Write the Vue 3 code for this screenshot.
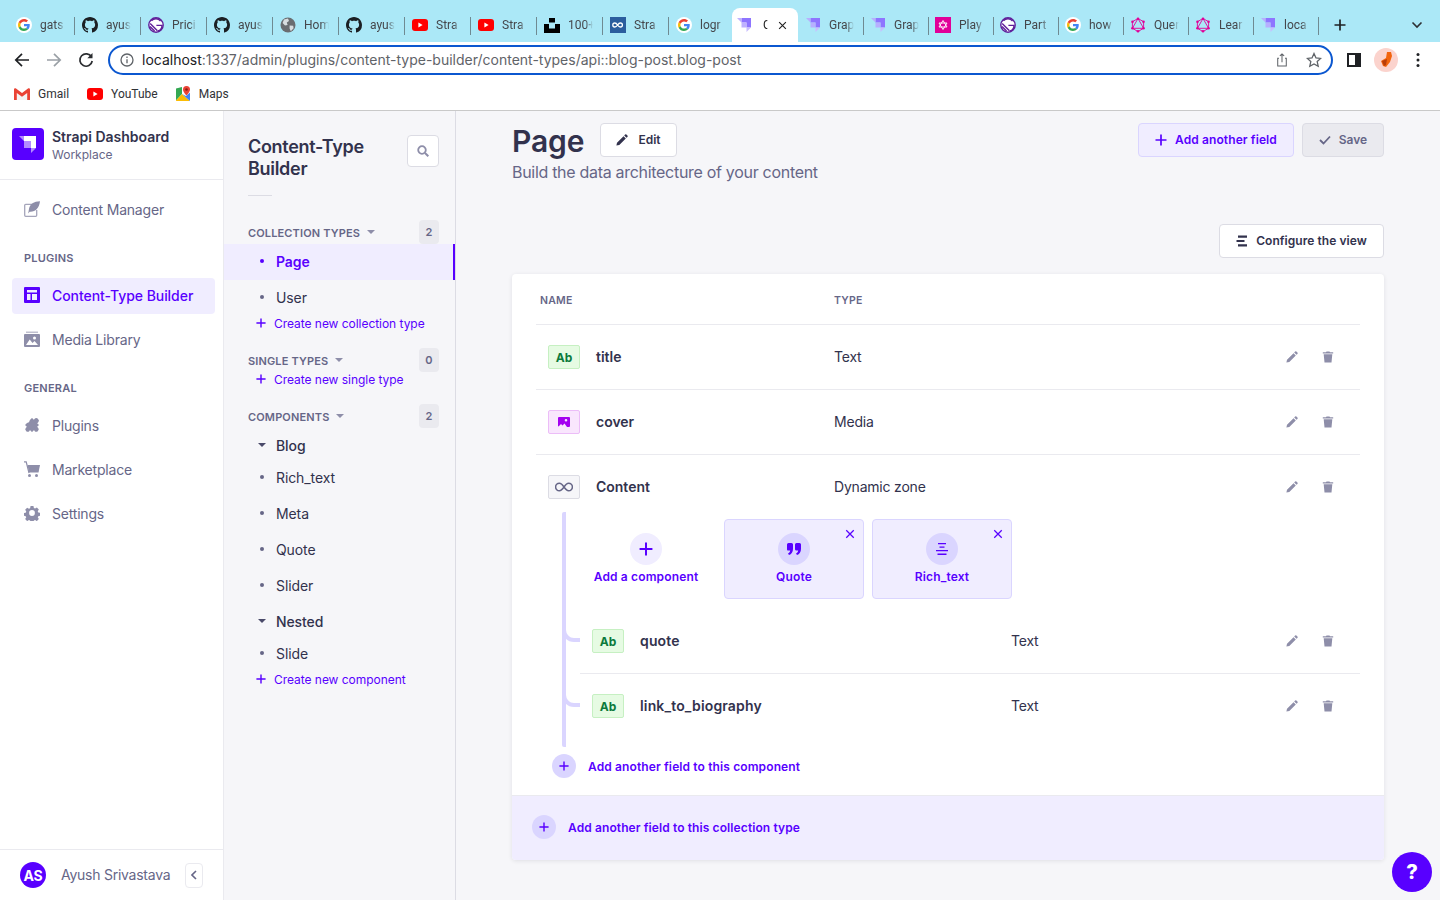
<script setup>
const tabs = [
  { i: 'g', t: 'gats' }, { i: 'gh', t: 'ayus' }, { i: 'gatsby', t: 'Prici' }, { i: 'gh', t: 'ayus' },
  { i: 'globe', t: 'Hom' }, { i: 'gh', t: 'ayus' }, { i: 'yt', t: 'Stra' }, { i: 'yt', t: 'Stra' },
  { i: 'unsplash', t: '100+' }, { i: 'coop', t: 'Stra' }, { i: 'g', t: 'logr' },
  { i: 'strapi', t: 'C', active: true },
  { i: 'strapi', t: 'Grap', n: true }, { i: 'strapi', t: 'Grap', n: true }, { i: 'play', t: 'Play', n: true },
  { i: 'gatsby', t: 'Part', n: true }, { i: 'g', t: 'how', n: true }, { i: 'gql', t: 'Quer', n: true },
  { i: 'gql', t: 'Lear', n: true }, { i: 'strapi', t: 'loca', n: true, last: true }
]
const components = ['Rich_text', 'Meta', 'Quote', 'Slider']
</script>

<template>
  <div class="app">
    <svg class="defs" width="0" height="0" aria-hidden="true">
      <symbol id="g" viewBox="-8 -8 64 64">
        <circle cx="24" cy="24" r="32" fill="#fff" />
        <path fill="#EA4335" d="M24 9.5c3.54 0 6.71 1.22 9.21 3.6l6.85-6.85C35.9 2.38 30.47 0 24 0 14.62 0 6.51 5.38 2.56 13.22l7.98 6.19C12.43 13.72 17.74 9.5 24 9.5z" />
        <path fill="#4285F4" d="M46.98 24.55c0-1.57-.15-3.09-.38-4.55H24v9.02h12.94c-.58 2.96-2.26 5.48-4.78 7.18l7.73 6c4.51-4.18 7.09-10.36 7.09-17.65z" />
        <path fill="#FBBC05" d="M10.53 28.59c-.48-1.45-.76-2.99-.76-4.59s.27-3.14.76-4.59l-7.98-6.19C.92 16.46 0 20.12 0 24c0 3.88.92 7.54 2.56 10.78l7.97-6.19z" />
        <path fill="#34A853" d="M24 48c6.48 0 11.93-2.13 15.89-5.81l-7.73-6c-2.15 1.45-4.92 2.3-8.16 2.3-6.26 0-11.57-4.22-13.47-9.91l-7.98 6.19C6.51 42.62 14.62 48 24 48z" />
      </symbol>
      <symbol id="gh" viewBox="0 0 16 16">
        <path fill="#1b1f23" d="M8 0C3.58 0 0 3.58 0 8c0 3.54 2.29 6.53 5.47 7.59.4.07.55-.17.55-.38 0-.19-.01-.82-.01-1.49-2.01.37-2.53-.49-2.69-.94-.09-.23-.48-.94-.82-1.13-.28-.15-.68-.52-.01-.53.63-.01 1.08.58 1.23.82.72 1.21 1.87.87 2.33.66.07-.52.28-.87.51-1.07-1.78-.2-3.64-.89-3.64-3.95 0-.87.31-1.59.82-2.15-.08-.2-.36-1.02.08-2.12 0 0 .67-.21 2.2.82.64-.18 1.32-.27 2-.27.68 0 1.36.09 2 .27 1.53-1.04 2.2-.82 2.2-.82.44 1.1.16 1.92.08 2.12.51.56.82 1.27.82 2.15 0 3.07-1.87 3.75-3.65 3.95.29.25.54.73.54 1.48 0 1.07-.01 1.93-.01 2.2 0 .21.15.46.55.38A8.013 8.013 0 0016 8c0-4.42-3.58-8-8-8z" />
      </symbol>
      <symbol id="gatsby" viewBox="0 0 16 16">
        <circle cx="8" cy="8" r="7.2" fill="#fff" stroke="#5f1f9a" stroke-width="1.4" />
        <path d="M2 9.5 6.6 14M2.2 6.6 9.4 13.8M3.4 3.8A6 6 0 0 1 12.6 4M8.4 8.4H14A6 6 0 0 1 10 14" fill="none" stroke="#5f1f9a" stroke-width="1.4" />
      </symbol>
      <symbol id="globe" viewBox="0 0 16 16">
        <circle cx="8" cy="8" r="7.5" fill="#6a6d71" />
        <path fill="#d8dde0" d="M4 2.5 8 1.6 9 4 6.8 5.6 7.6 8 5 8.6 2.6 6ZM9.6 8.6l3.6.2.4 2.4-2.8 3-1.2-2.6Z" />
      </symbol>
      <symbol id="yt" viewBox="0 0 16 16">
        <rect y="2" width="16" height="12" rx="3" fill="#f00" />
        <path fill="#fff" d="m6.4 5.6 4.2 2.4-4.2 2.4z" />
      </symbol>
      <symbol id="unsplash" viewBox="0 0 16 16">
        <path fill="#000" d="M5 1h6v4.5H5zM0 7h5v4.5h6V7h5v9H0z" />
      </symbol>
      <symbol id="coop" viewBox="0 0 16 16">
        <rect width="16" height="16" fill="#2b5d9e" />
        <path d="M7.6 8C6.6 6.5 5.8 6 4.8 6a2 2 0 0 0 0 4c1 0 1.8-.5 2.8-2Zm0 0c1-1.500 1.800-2 2.800-2a2 2 0 0 1 0 4c-1 0-1.800-.5-2.800-2Z" fill="none" stroke="#fff" stroke-width="1.300" />
      </symbol>
      <symbol id="strapi" viewBox="0 0 16 16">
        <path fill="#8e75ff" d="M5.500 1H15v9.500H10.500V5.500H5.500z" />
        <path fill="#b8a8ff" d="M1 1h4.500v4.500zM5.500 5.500h5v5h-5z" opacity=".9" />
        <path fill="#c9bdff" d="M10.500 10.500H15L10.500 15z" />
      </symbol>
      <symbol id="play" viewBox="0 0 16 16">
        <rect width="16" height="16" fill="#e10098" />
        <path d="M8 3.500 12 10H4ZM4 6l4 6.500L12 6Z" fill="none" stroke="#fff" stroke-width=".9" />
      </symbol>
      <symbol id="gql" viewBox="0 0 16 16">
        <path d="M8 1.500 13.600 4.700V11.300L8 14.500 2.400 11.300V4.700ZM8 1.500 13.600 11.300H2.400Z" fill="none" stroke="#e10098" stroke-width=".9" />
        <g fill="#e10098"><circle cx="8" cy="1.800" r="1.300" /><circle cx="13.500" cy="4.800" r="1.300" /><circle cx="13.500" cy="11.200" r="1.300" /><circle cx="8" cy="14.200" r="1.300" /><circle cx="2.500" cy="11.200" r="1.300" /><circle cx="2.500" cy="4.800" r="1.300" /></g>
      </symbol>
      <symbol id="plus" viewBox="0 0 12 12">
        <path d="M6 .5v11M.5 6h11" fill="none" stroke="currentColor" stroke-width="1.700" />
      </symbol>
      <symbol id="pencil" viewBox="0 0 12 12">
        <path fill="currentColor" d="M9.100.6a.9.9 0 0 1 1.300 0l1 1a.9.9 0 0 1 0 1.300l-.9.9-2.300-2.300zM7.500 2.200l2.300 2.300-6.500 6.500L.4 11.600 1 8.700z" />
      </symbol>
      <symbol id="trash" viewBox="0 0 12 12">
        <path fill="currentColor" d="M4.500.4h3l.5.9h3.200v1.200H.8V1.300H4zM1.700 3.300h8.600l-.8 8.300H2.500z" />
      </symbol>
      <symbol id="close" viewBox="0 0 12 12">
        <path d="M1.500 1.500l9 9M10.500 1.500l-9 9" fill="none" stroke="currentColor" stroke-width="1.500" />
      </symbol>
    </svg>

    <header class="chrome">
      <div class="tabstrip">
        <div
          v-for="(tab, i) in tabs"
          :key="i"
          class="tab"
          :class="{ active: tab.active, narrow: tab.n, last: tab.last }"
        >
          <svg class="fav"><use :href="'#' + tab.i" /></svg>
          <span class="tab-title">{{ tab.t }}</span>
          <svg v-if="tab.active" class="tab-x" viewBox="0 0 12 12"><use href="#close" /></svg>
        </div>
        <svg class="newtab" viewBox="0 0 12 12"><use href="#plus" /></svg>
        <svg class="tabs-menu" viewBox="0 0 12 8"><path d="M1.500 1.500 6 6l4.500-4.500" fill="none" stroke="#2c2f33" stroke-width="1.600" /></svg>
      </div>

      <div class="toolbar">
        <svg class="tool back" viewBox="0 0 16 16"><path d="M15 8H2M8 1.800 1.800 8 8 14.200" fill="none" stroke="currentColor" stroke-width="1.700" /></svg>
        <svg class="tool fwd" viewBox="0 0 16 16"><path d="M1 8h13M8 1.800 14.200 8 8 14.200" fill="none" stroke="currentColor" stroke-width="1.700" /></svg>
        <svg class="tool reload" viewBox="0 0 16 16"><path d="M13.500 5A6.200 6.200 0 1 0 14.200 9" fill="none" stroke="currentColor" stroke-width="1.700" /><path d="M14.500 1v5.200H9.300z" fill="currentColor" /></svg>
        <div class="omnibox">
          <svg class="info" viewBox="0 0 14 14"><circle cx="7" cy="7" r="6" fill="none" stroke="#5f6368" stroke-width="1.300" /><path d="M7 6.200v4M7 3.600v1.400" stroke="#5f6368" stroke-width="1.300" /></svg>
          <span class="url"><b>localhost</b>:1337/admin/plugins/content-type-builder/content-types/api::blog-post.blog-post</span>
          <svg class="omni-ic share" viewBox="0 0 14 16"><path d="M3.500 6H2v9h10V6h-1.500M7 10.500V1M4.500 3.300 7 .9l2.500 2.400" fill="none" stroke="#5f6368" stroke-width="1.200" /></svg>
          <svg class="omni-ic star" viewBox="0 0 16 16"><path d="m8 1.500 2 4.400 4.700.5-3.500 3.200 1 4.700L8 11.900l-4.200 2.400 1-4.700L1.300 6.400 6 5.900z" fill="none" stroke="#5f6368" stroke-width="1.300" /></svg>
        </div>
        <svg class="panel" viewBox="0 0 14 14"><path d="M0 0h14v14H0zM2 2v10h6V2z" fill="#1f2124" fill-rule="evenodd" /></svg>
        <div class="profile">
          <svg viewBox="0 0 24 24" width="24" height="24"><circle cx="12" cy="12" r="12" fill="#fbd3cd" /><path fill="#f2640d" d="M13 4h4l1 4-2 6-4 5-3-1-2-5 5-3z" /><path fill="#b83c08" d="m8 13 5-2-1 6-2 1z" /></svg>
        </div>
        <svg class="kebab" viewBox="0 0 4 16"><circle cx="2" cy="2.500" r="1.500" /><circle cx="2" cy="8" r="1.500" /><circle cx="2" cy="13.500" r="1.500" /></svg>
      </div>

      <div class="bookmarks">
        <div class="bm gmail">
          <svg viewBox="0 0 16 12" width="16" height="12"><path fill="#f4f4f4" d="M2.500 3 8 7l5.500-4v9h-11z" /><path fill="#ea4335" d="M0 1.500C0 .5 1.200-.2 2 .5L8 5l6-4.500c.8-.7 2-.0 2 1V12h-2.800V5L8 8.800 2.800 5v7H0z" /></svg>
          <span>Gmail</span>
        </div>
        <div class="bm yt">
          <svg><use href="#yt" /></svg>
          <span>YouTube</span>
        </div>
        <div class="bm maps">
          <svg viewBox="0 0 16 16" width="16" height="16">
            <path fill="#34a853" d="M1 2.500 7 1v7L1 14.500z" />
            <path fill="#fbbc05" d="M1 14.500 7 8l8 7H1z" />
            <path fill="#4285f4" d="M7 8 15 15V6.500L11 10z" />
            <path fill="#ea4335" d="M11.500 0A3.500 3.500 0 0 0 8 3.500C8 6 11.500 9.500 11.500 9.500S15 6 15 3.500A3.500 3.500 0 0 0 11.500 0Z" />
            <circle cx="11.500" cy="3.500" r="1.300" fill="#8c1c13" />
          </svg>
          <span>Maps</span>
        </div>
      </div>
    </header>

    <div class="shell">
      <aside class="nav">
        <div class="brand">
          <div class="logo">
            <svg viewBox="0 0 32 32" width="32" height="32">
              <path fill="#fff" d="M12 8h12v12h-5v-7h-7z" />
              <path fill="#fff" opacity=".55" d="M7 8h5v5zM12 13h7v7h-7zM19 20h5l-5 5z" />
            </svg>
          </div>
          <div>
            <div class="brand-name">Strapi Dashboard</div>
            <div class="brand-sub">Workplace</div>
          </div>
        </div>

        <div class="nav-list">
          <a class="nav-item">
            <svg viewBox="0 0 16 16"><path fill="none" stroke="#a5a5ba" stroke-width="1.300" d="M8 3.300H1.700a1 1 0 0 0-1 1v10a1 1 0 0 0 1 1h10a1 1 0 0 0 1-1V9" /><path fill="#8e8ea9" d="M16 .3C10 .3 5.600 3 4.800 9c-.1 1-.4 2.400-.8 3.500l1.700-1.800c5.300.5 9.500-3.300 10.300-10.400Z" /></svg>
            Content Manager
          </a>

          <div class="nav-label first">Plugins</div>
          <a class="nav-item current">
            <svg viewBox="0 0 16 16"><path fill="currentColor" fill-rule="evenodd" d="M1 0h14a1 1 0 0 1 1 1v14a1 1 0 0 1-1 1H1a1 1 0 0 1-1-1V1a1 1 0 0 1 1-1Zm2 3v2.500h10V3Zm0 4v6h3.500V7Zm5 0v6h5V7Z" /></svg>
            Content-Type Builder
          </a>
          <a class="nav-item">
            <svg viewBox="0 0 16 16"><path fill="#c0c0cf" d="M2 .5h12v1.500H2z" /><path fill="#8e8ea9" fill-rule="evenodd" d="M1 3h14a1 1 0 0 1 1 1v11a1 1 0 0 1-1 1H1a1 1 0 0 1-1-1V4a1 1 0 0 1 1-1Zm9.500 2.500a1.500 1.500 0 1 0 0 3 1.500 1.500 0 0 0 0-3ZM2 14h12l-3.500-4-2 2-2.800-3.500Z" /></svg>
            Media Library
          </a>

          <div class="nav-label">General</div>
          <a class="nav-item">
            <svg viewBox="0 0 16 16"><g fill="#8e8ea9" transform="rotate(45 8 8)"><rect x="3" y="3" width="10" height="10" rx=".5" /><circle cx="8" cy="2" r="2.600" /><circle cx="14" cy="8" r="2.400" /><circle cx="8" cy="14" r="2.400" /><circle cx="2" cy="8" r="1.800" fill="#fff" /></g></svg>
            Plugins
          </a>
          <a class="nav-item">
            <svg viewBox="0 0 16 16"><path fill="#8e8ea9" d="M3.500 4H16l-1.500 7.500H5Z" /><path fill="none" stroke="#8e8ea9" stroke-width="1.200" d="M0 .8h2.200l2.800 11.200" /><circle cx="5.500" cy="14.500" r="1.500" fill="#8e8ea9" /><circle cx="12.500" cy="14.500" r="1.500" fill="#8e8ea9" /></svg>
            Marketplace
          </a>
          <a class="nav-item">
            <svg viewBox="0 0 16 16"><path fill="#8e8ea9" fill-rule="evenodd" d="M6.400.3h3.200l.5 2.200 1.300.6 2-1.200 2.200 2.200-1.200 2 .6 1.300 2.200.4v3.200l-2.200.5-.6 1.300 1.200 2-2.200 2.200-2-1.200-1.300.6-.5 2.200H6.400l-.5-2.200-1.300-.6-2 1.200-2.200-2.200 1.200-2-.6-1.300-2.200-.5V8l2.200-.4.600-1.300-1.200-2 2.200-2.200 2 1.200 1.300-.6ZM8 4.800a3.200 3.200 0 1 0 0 6.400 3.200 3.200 0 0 0 0-6.400Z" transform="translate(.8 .8) scale(.9)" /></svg>
            Settings
          </a>
        </div>

        <div class="user">
          <div class="avatar">AS</div>
          <span class="user-name">Ayush Srivastava</span>
          <button class="collapse">
            <svg viewBox="0 0 6 10" width="6" height="10"><path d="M5 1 1 5l4 4" fill="none" stroke="#666687" stroke-width="1.600" /></svg>
          </button>
        </div>
      </aside>

      <aside class="sub">
        <div class="sub-head">
          <h2>Content-Type Builder</h2>
          <button class="search">
            <svg viewBox="0 0 12 12" width="12" height="12"><circle cx="5" cy="5" r="3.800" fill="none" stroke="#8e8ea9" stroke-width="1.800" /><path d="m8 8 3.300 3.300" stroke="#8e8ea9" stroke-width="2" /></svg>
          </button>
        </div>
        <div class="sub-rule"></div>

        <div class="sec-head"><span class="sec-label">Collection types</span><i class="caret"></i><span class="count">2</span></div>
        <a class="link selected"><i class="dot"></i>Page</a>
        <a class="link"><i class="dot"></i>User</a>
        <a class="create"><svg viewBox="0 0 12 12"><use href="#plus" /></svg>Create new collection type</a>

        <div class="sec-head spaced"><span class="sec-label">Single types</span><i class="caret"></i><span class="count">0</span></div>
        <a class="create"><svg viewBox="0 0 12 12"><use href="#plus" /></svg>Create new single type</a>

        <div class="sec-head spaced"><span class="sec-label">Components</span><i class="caret"></i><span class="count">2</span></div>
        <div class="group"><i class="caret dark"></i>Blog</div>
        <a v-for="c in components" :key="c" class="link"><i class="dot"></i>{{ c }}</a>
        <div class="group"><i class="caret dark"></i>Nested</div>
        <a class="link"><i class="dot"></i>Slide</a>
        <a class="create"><svg viewBox="0 0 12 12"><use href="#plus" /></svg>Create new component</a>
      </aside>

      <main class="main">
        <div class="page-top">
          <h1>Page</h1>
          <button class="btn edit">
            <svg viewBox="0 0 12 12"><use href="#pencil" /></svg>Edit
          </button>
          <span class="grow"></span>
          <button class="btn add"><svg viewBox="0 0 12 12"><use href="#plus" /></svg>Add another field</button>
          <button class="btn save">
            <svg viewBox="0 0 12 10"><path d="M1 5l3.500 3.500L11 1.500" fill="none" stroke="currentColor" stroke-width="1.800" /></svg>Save
          </button>
        </div>
        <p class="subtitle">Build the data architecture of your content</p>

        <div class="config-row">
          <button class="btn config">
            <svg viewBox="0 0 12 12"><path d="M2 .5h9v2.200H2zM.5 4.900h8v2.200h-8zM2 9.300h9v2.200H2z" fill="currentColor" /></svg>Configure the view
          </button>
        </div>

        <section class="card">
          <div class="thead"><span class="col-name">Name</span><span>Type</span></div>

          <div class="row">
            <div class="cell-name"><span class="badge text">Ab</span><b>title</b></div>
            <span class="cell-type">Text</span>
            <div class="acts"><svg viewBox="0 0 12 12"><use href="#pencil" /></svg><svg viewBox="0 0 12 12"><use href="#trash" /></svg></div>
          </div>
          <div class="row">
            <div class="cell-name">
              <span class="badge media"><svg viewBox="0 0 12 10" width="12" height="10"><path fill="#a400f0" fill-rule="evenodd" d="M1 0h10a1 1 0 0 1 1 1v8a1 1 0 0 1-1 1H9L6.500 6.500 4.500 8.500 3 7 .5 9.500A1 1 0 0 1 0 9V1a1 1 0 0 1 1-1Zm7 2a1.300 1.300 0 1 0 0 2.600A1.300 1.300 0 0 0 8 2Z" /></svg></span>
              <b>cover</b>
            </div>
            <span class="cell-type">Media</span>
            <div class="acts"><svg viewBox="0 0 12 12"><use href="#pencil" /></svg><svg viewBox="0 0 12 12"><use href="#trash" /></svg></div>
          </div>
          <div class="row open">
            <div class="cell-name">
              <span class="badge dz"><svg viewBox="0 0 18 10" width="18" height="10"><path d="M9 5C7.300 2.500 6 1.200 4.400 1.200a3.800 3.800 0 0 0 0 7.600C6 8.800 7.300 7.500 9 5Zm0 0c1.700-2.500 3-3.800 4.600-3.800a3.800 3.800 0 0 1 0 7.600C12 8.800 10.700 7.500 9 5Z" fill="none" stroke="#666687" stroke-width="1.500" /></svg></span>
              <b>Content</b>
            </div>
            <span class="cell-type">Dynamic zone</span>
            <div class="acts"><svg viewBox="0 0 12 12"><use href="#pencil" /></svg><svg viewBox="0 0 12 12"><use href="#trash" /></svg></div>
          </div>

          <div class="zone">
            <div class="tiles">
              <div class="tile plain">
                <span class="disc"><svg viewBox="0 0 12 12" width="14" height="14"><use href="#plus" /></svg></span>
                <span class="tile-label">Add a component</span>
              </div>
              <div class="tile">
                <svg class="tile-x" viewBox="0 0 12 12"><use href="#close" /></svg>
                <span class="disc"><svg viewBox="0 0 14 12" width="14" height="12"><path fill="currentColor" d="M0 1.500A1.500 1.500 0 0 1 1.500 0h3A1.500 1.500 0 0 1 6 1.500V6c0 3-1.500 5.300-4 6L1 10.500c1.300-.6 2-1.500 2.200-2.900H1.500A1.500 1.500 0 0 1 0 6Zm8 0A1.500 1.500 0 0 1 9.500 0h3A1.500 1.500 0 0 1 14 1.500V6c0 3-1.500 5.300-4 6L9 10.500c1.300-.6 2-1.500 2.200-2.900H9.500A1.500 1.500 0 0 1 8 6Z" /></svg></span>
                <span class="tile-label">Quote</span>
              </div>
              <div class="tile">
                <svg class="tile-x" viewBox="0 0 12 12"><use href="#close" /></svg>
                <span class="disc"><svg viewBox="0 0 12 12" width="12" height="12"><path fill="currentColor" d="M2 0h8v1.300H2zM3.500 3.500h5v1.300h-5zM0 7h12v1.300H0zM1.500 10.500h9V12h-9z" /></svg></span>
                <span class="tile-label">Rich_text</span>
              </div>
            </div>

            <div class="subrow line">
              <div class="sub-name"><span class="badge text">Ab</span><b>quote</b></div>
              <span class="cell-type">Text</span>
              <div class="acts"><svg viewBox="0 0 12 12"><use href="#pencil" /></svg><svg viewBox="0 0 12 12"><use href="#trash" /></svg></div>
            </div>
            <div class="subrow">
              <div class="sub-name"><span class="badge text">Ab</span><b>link_to_biography</b></div>
              <span class="cell-type">Text</span>
              <div class="acts"><svg viewBox="0 0 12 12"><use href="#pencil" /></svg><svg viewBox="0 0 12 12"><use href="#trash" /></svg></div>
            </div>
          </div>

          <div class="add-inner">
            <span class="round"><svg viewBox="0 0 12 12" width="10" height="10"><use href="#plus" /></svg></span>
            Add another field to this component
          </div>
          <div class="add-outer">
            <span class="round"><svg viewBox="0 0 12 12" width="10" height="10"><use href="#plus" /></svg></span>
            Add another field to this collection type
          </div>
        </section>
      </main>
    </div>

    <button class="help">?</button>
  </div>
</template>

<style>
html, body { margin: 0; background: #f6f6f9; }
</style>

<style scoped>
.app {
  --p: #5800ff;
  --p-soft: #f0edff;
  --p-mid: #dad5ff;
  position: relative;
  height: 900px;
  width: 1440px;
  overflow: hidden;
  display: flex;
  flex-direction: column;
  font-family: Inter, "Liberation Sans", sans-serif;
  color: #32324d;
  background: #f6f6f9;
}
.defs { position: absolute; }
button { font-family: inherit; cursor: pointer; }
h1, h2, p { margin: 0; }

/* browser */
.chrome { background: #fff; border-bottom: 1px solid #c9c9c9; flex: none; }
.tabstrip {
  height: 42px;
  background: #abe8f7;
  display: flex;
  align-items: flex-end;
  padding-left: 8px;
}
.tab {
  width: 66px;
  height: 34px;
  flex: none;
  box-sizing: border-box;
  display: flex;
  align-items: center;
  padding-left: 8px;
  position: relative;
  font-size: 12px;
  color: #45474b;
  font-family: Roboto, Inter, sans-serif;
}
.tab.narrow { width: 65px; }
.tab.narrow .fav { margin-left: -1px; }
.tab::after {
  content: "";
  position: absolute;
  right: -1px;
  top: 9px;
  height: 18px;
  width: 1px;
  background: #6f8a92;
}
.tab.active::after,
.tab:nth-child(11)::after { display: none; }
.tab.active { background: #fff; border-radius: 8px 8px 0 0; margin-left: -2px; }
.tab.active .fav { margin-left: -4px; }
.fav { width: 16px; height: 16px; flex: none; }
.tab-title {
  margin-left: 8px;
  width: 25px;
  white-space: nowrap;
  -webkit-mask-image: linear-gradient(90deg, #000 70%, transparent);
  mask-image: linear-gradient(90deg, #000 70%, transparent);
}
.tab.active .tab-title { width: 5px; margin-left: 11px; color: #222; }
.tab-x { width: 9px; height: 9px; margin-left: 10px; color: #222; }
.newtab { width: 12px; height: 12px; color: #1f2124; margin: 0 0 11px 16px; }
.tabs-menu { width: 12px; height: 8px; margin: 0 0 13px 65px; }

.toolbar { height: 36px; display: flex; align-items: center; }
.tool { width: 16px; height: 16px; flex: none; }
.back { margin-left: 14px; color: #1f2124; }
.fwd { margin-left: 16px; color: #9aa0a6; }
.reload { margin-left: 16px; color: #2b2d30; }
.omnibox {
  margin-left: 14px;
  width: 1225px;
  height: 30px;
  box-sizing: border-box;
  border: 2.5px solid #0b57d0;
  border-radius: 15px;
  display: flex;
  align-items: center;
  padding-left: 10px;
}
.info { width: 14px; height: 14px; flex: none; }
.url { margin-left: 8px; padding-bottom: 1px; font-size: 14px; color: #5f6368; font-family: Inter, sans-serif; }
.url b { font-weight: 400; color: #202124; }
.omni-ic { flex: none; }
.share { width: 12px; height: 14px; margin-left: auto; }
.star { width: 16px; height: 16px; margin: 0 9px 0 18px; }
.panel { width: 14px; height: 14px; margin-left: 14px; flex: none; }
.profile { margin-left: 13px; width: 24px; height: 24px; flex: none; }
.kebab { width: 4px; height: 16px; margin-left: 18px; fill: #1f2124; flex: none; }

.bookmarks { height: 32px; display: flex; align-items: center; font-size: 12px; color: #303236; font-family: Roboto, Inter, sans-serif; }
.bm { display: flex; align-items: center; gap: 8px; }
.bm svg { width: 16px; height: 16px; flex: none; }
.bm.gmail svg { height: 12px; }
.gmail { margin-left: 14px; }
.yt { margin-left: 18px; }
.maps { margin-left: 17px; }

/* shell */
.shell { flex: 1; display: flex; min-height: 0; }
.nav {
  width: 224px;
  flex: none;
  box-sizing: border-box;
  background: #fff;
  border-right: 1px solid #eaeaef;
  display: flex;
  flex-direction: column;
}
.brand {
  height: 69px;
  box-sizing: border-box;
  padding: 17px 12px 0;
  border-bottom: 1px solid #eaeaef;
  display: flex;
  gap: 8px;
}
.logo { width: 32px; height: 32px; border-radius: 4px; background: var(--p); flex: none; }
.brand-name { font-size: 14px; font-weight: 600; line-height: 18px; color: #32324d; }
.brand-sub { font-size: 12px; line-height: 16px; color: #666687; margin-top: 1px; }
.nav-list { padding: 12px 8px 0 12px; display: flex; flex-direction: column; }
.nav-item {
  height: 36px;
  box-sizing: border-box;
  border-radius: 4px;
  display: flex;
  align-items: center;
  gap: 12px;
  padding: 0 0 2px 12px;
  font-size: 14px;
  letter-spacing: -.2px;
  color: #666687;
  margin-bottom: 8px;
}
.nav-item svg { width: 16px; height: 16px; flex: none; }
.nav-item.current { background: var(--p-soft); color: var(--p); font-weight: 500; letter-spacing: -.05px; }
.nav-label {
  font-size: 11px;
  font-weight: 600;
  letter-spacing: .02em;
  line-height: 14px;
  height: 14px;
  text-transform: uppercase;
  color: #666687;
  padding-left: 12px;
  margin: 15px 0 13px;
}
.user {
  margin-top: auto;
  height: 51px;
  box-sizing: border-box;
  border-top: 1px solid #eaeaef;
  display: flex;
  align-items: center;
  padding-left: 20px;
}
.avatar {
  width: 26px;
  height: 26px;
  border-radius: 50%;
  background: var(--p);
  color: #fff;
  font-size: 14px;
  font-weight: 700;
  display: flex;
  align-items: center;
  justify-content: center;
  letter-spacing: -.02em;
}
.user-name { margin: -2px 0 0 15px; font-size: 14px; letter-spacing: -.25px; color: #666687; white-space: nowrap; }
.collapse {
  margin-left: 15px;
  width: 18px;
  height: 25px;
  border: 1px solid #eaeaef;
  border-radius: 4px;
  background: #fff;
  padding: 0;
  display: flex;
  align-items: center;
  justify-content: center;
}

.sub {
  width: 232px;
  flex: none;
  box-sizing: border-box;
  background: #f6f6f9;
  border-right: 1px solid #dcdce4;
}
.sub-head { display: flex; padding: 24px 16px 0 24px; justify-content: space-between; align-items: flex-start; }
.sub-head h2 { font-size: 18px; line-height: 22px; font-weight: 600; letter-spacing: -.3px; width: 140px; height: 44px; padding-top: 1px; box-sizing: border-box; color: #32324d; }
.search {
  width: 32px;
  height: 32px;
  padding: 0;
  background: #fff;
  border: 1px solid #dcdce4;
  border-radius: 4px;
  display: flex;
  align-items: center;
  justify-content: center;
}
.sub-rule { width: 24px; height: 1px; background: #dcdce4; margin: 16px 0 24px 24px; }
.sec-head { height: 24px; display: flex; align-items: center; padding: 0 16px 0 24px; }
.sec-head.spaced { margin-top: 16px; }
.sec-label { font-size: 11px; font-weight: 600; text-transform: uppercase; letter-spacing: .14px; color: #666687; margin-top: 2px; }
.caret {
  display: inline-block;
  width: 0;
  height: 0;
  border-left: 4px solid transparent;
  border-right: 4px solid transparent;
  border-top: 4px solid #8e8ea9;
  margin-left: 7px;
}
.count {
  margin-left: auto;
  width: 20px;
  height: 24px;
  background: #eaeaef;
  border-radius: 4px;
  font-size: 11px;
  font-weight: 600;
  color: #666687;
  display: flex;
  align-items: center;
  justify-content: center;
}
.link {
  height: 36px;
  display: flex;
  align-items: center;
  padding: 0 0 2px 36px;
  font-size: 14px;
  letter-spacing: -.1px;
  color: #32324d;
  box-sizing: border-box;
}
.dot { width: 4px; height: 4px; border-radius: 50%; background: #666687; margin-right: 12px; }
.link.selected { background: var(--p-soft); color: var(--p); font-weight: 600; border-right: 2px solid var(--p); }
.link.selected .dot { background: var(--p); }
.create {
  height: 16px;
  box-sizing: border-box;
  display: flex;
  align-items: center;
  padding: 0 0 2px 32px;
  font-size: 12px;
  letter-spacing: -.04px;
  color: var(--p);
}
.create svg { width: 10px; height: 10px; margin-right: 8px; flex: none; }
.group {
  height: 36px;
  box-sizing: border-box;
  margin-bottom: -4px;
  display: flex;
  align-items: center;
  padding: 0 0 2px 34px;
  font-size: 14px;
  letter-spacing: -.1px;
  font-weight: 500;
}
.group .caret { margin: 0 10px 0 0; }
.group .caret.dark { border-top-color: #4a4a6a; }

/* main */
.main { flex: 1; min-width: 0; padding: 12px 56px 0; }
.page-top { display: flex; align-items: center; height: 34px; }
h1 { font-size: 30px; font-weight: 600; line-height: 38px; letter-spacing: -.1px; width: 72px; color: #32324d; margin-top: 1px; }
.grow { flex: 1; }
.btn {
  height: 34px;
  box-sizing: border-box;
  border-radius: 4px;
  display: inline-flex;
  align-items: center;
  justify-content: center;
  font-size: 12px;
  font-weight: 600;
  gap: 8px;
  padding: 0 0 2px;
  border: 1px solid #dcdce4;
  background: #fff;
  color: #32324d;
}
.btn svg { width: 12px; height: 12px; flex: none; margin-top: 2px; }
.edit { width: 77px; margin-left: 16px; gap: 10px; }
.add { width: 156px; background: var(--p-soft); border-color: var(--p-mid); color: var(--p); letter-spacing: .1px; }
.save { width: 82px; margin-left: 8px; background: #eaeaef; color: #666687; }
.save svg { height: 10px; }
.subtitle { font-size: 16px; line-height: 24px; letter-spacing: -.3px; color: #666687; margin-top: 3px; }
.config-row { display: flex; justify-content: flex-end; margin-top: 40px; }
.config { width: 165px; letter-spacing: .05px; }
.card {
  margin-top: 16px;
  background: #fff;
  border-radius: 4px;
  box-shadow: 0 1px 4px rgba(33, 33, 52, .1);
  overflow: hidden;
}
.thead {
  margin: 0 24px;
  height: 51px;
  box-sizing: border-box;
  border-bottom: 1px solid #eaeaef;
  padding: 2px 0 0 4px;
  display: flex;
  align-items: center;
  font-size: 10.500px;
  font-weight: 600;
  text-transform: uppercase;
  letter-spacing: .02em;
  color: #666687;
}
.col-name { width: 294px; }
.row {
  margin: 0 24px;
  height: 65px;
  box-sizing: border-box;
  border-bottom: 1px solid #eaeaef;
  display: flex;
  align-items: center;
  font-size: 14px;
}
.row.open { border-bottom: 0; height: 64px; margin-bottom: -7px; }
.cell-name { width: 298px; padding-left: 12px; box-sizing: border-box; display: flex; align-items: center; gap: 16px; flex: none; }
.cell-name b, .sub-name b { font-weight: 600; letter-spacing: -.02px; color: #32324d; margin-top: -2px; }
.sub-name b { letter-spacing: .15px; }
.cell-type { color: #32324d; letter-spacing: -.2px; margin-top: -2px; }
.acts { margin-left: auto; padding-right: 26px; display: flex; gap: 24px; color: #8e8ea9; }
.acts svg { width: 12px; height: 12px; }
.badge {
  width: 32px;
  height: 24px;
  box-sizing: border-box;
  border-radius: 2px;
  display: flex;
  align-items: center;
  justify-content: center;
  flex: none;
  font-size: 12px;
  font-weight: 700;
  border: 1px solid;
}
.badge.text { background: #e6fbe3; border-color: #c6f0c2; color: #0c7a3c; }
.badge.media { background: #f9e6fd; border-color: #ecbdf8; }
.badge.dz { background: #f6f6f9; border-color: #dcdce4; }

.zone {
  margin-left: 50px;
  height: 235px;
  box-sizing: border-box;
  padding-top: 7px;
  border-left: 4px solid var(--p-mid);
  border-radius: 2px;
}
.tiles { display: flex; gap: 8px; padding-left: 10px; height: 80px; }
.tile {
  position: relative;
  width: 140px;
  box-sizing: border-box;
  border: 1px solid var(--p-mid);
  background: var(--p-soft);
  border-radius: 4px;
  display: flex;
  flex-direction: column;
  align-items: center;
  padding-top: 13px;
  color: var(--p);
}
.tile.plain { background: #fff; border-color: transparent; }
.tile-x { position: absolute; right: 8px; top: 9px; width: 10px; height: 10px; color: var(--p); }
.disc {
  width: 32px;
  height: 32px;
  border-radius: 50%;
  background: var(--p-mid);
  display: flex;
  align-items: center;
  justify-content: center;
  color: var(--p);
}
.plain .disc { background: var(--p-soft); }
.tile-label { font-size: 12px; font-weight: 600; letter-spacing: .15px; margin-top: 4px; line-height: 16px; color: var(--p); }
.subrow {
  position: relative;
  margin: 10px 24px -10px 14px;
  height: 65px;
  box-sizing: border-box;
  display: flex;
  align-items: center;
  font-size: 14px;
}
.subrow + .subrow { margin-top: 10px; height: 64px; }
.subrow.line { border-bottom: 1px solid #eaeaef; }
.subrow::before {
  content: "";
  position: absolute;
  left: -18px;
  top: 21px;
  width: 18px;
  height: 12px;
  border-left: 4px solid var(--p-mid);
  border-bottom: 4px solid var(--p-mid);
  border-bottom-left-radius: 14px;
  box-sizing: border-box;
}
.sub-name { width: 431px; padding-left: 12px; box-sizing: border-box; display: flex; align-items: center; gap: 16px; flex: none; }
.add-inner {
  height: 48px;
  box-sizing: border-box;
  padding: 7px 0 0 40px;
  display: flex;
  align-items: flex-start;
  gap: 12px;
  font-size: 12px;
  font-weight: 600;
  letter-spacing: .12px;
  line-height: 26px;
  color: var(--p);
}
.round {
  width: 24px;
  height: 24px;
  border-radius: 50%;
  background: var(--p-mid);
  display: flex;
  align-items: center;
  justify-content: center;
  color: var(--p);
  flex: none;
}
.add-outer {
  height: 65px;
  box-sizing: border-box;
  background: var(--p-soft);
  border-top: 1px solid #eaeaef;
  padding: 0 0 2px 20px;
  display: flex;
  align-items: center;
  gap: 12px;
  font-size: 12px;
  font-weight: 600;
  letter-spacing: .1px;
  color: var(--p);
}
.help {
  position: absolute;
  left: 1392px;
  top: 852px;
  width: 40px;
  height: 40px;
  border-radius: 50%;
  border: 0;
  background: var(--p);
  color: #fff;
  font-size: 20px;
  font-weight: 800;
  padding: 0;
}
</style>
